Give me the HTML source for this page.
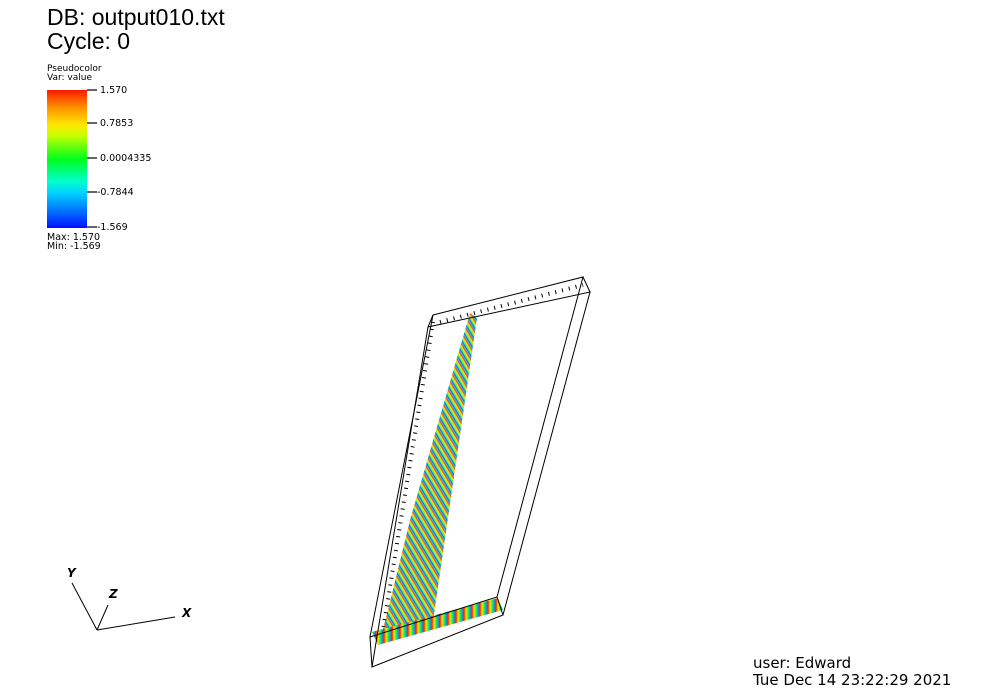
<!DOCTYPE html>
<html><head><style>
body{margin:0;width:1004px;height:696px;background:#fff;overflow:hidden;font-family:"DejaVu Sans","Liberation Sans",sans-serif;}
.t{position:absolute;color:#000;white-space:nowrap;}
</style></head><body>
<div class="t" style="left:47px;top:5px;font-size:23px;line-height:24px;font-family:'Liberation Sans',sans-serif;">DB: output010.txt<br>Cycle: 0</div>
<div class="t" style="left:47px;top:65px;font-size:9px;line-height:9px;">Pseudocolor<br>Var: value</div>
<div style="position:absolute;left:47px;top:90px;width:40px;height:138px;background:linear-gradient(#ff1a00,#ff8c00 12%,#ffe600 25%,#c8ff00 33%,#00ff1a 50%,#00ffcc 66%,#00d0ff 75%,#0060ff 90%,#0010ff);"></div>
<svg style="position:absolute;left:0;top:0" width="1004" height="696">
<g stroke="#000" stroke-width="1.2">
<line x1="87" y1="90" x2="97" y2="90"/><line x1="87" y1="123" x2="97" y2="123"/><line x1="87" y1="158" x2="97" y2="158"/><line x1="87" y1="192" x2="97" y2="192"/><line x1="87" y1="227" x2="97" y2="227"/>
</g>
<g font-family="DejaVu Sans,Liberation Sans,sans-serif" font-size="9.5" fill="#000">
<text x="100" y="93">1.570</text><text x="100" y="126">0.7853</text><text x="100" y="161">0.0004335</text><text x="97" y="195">-0.7844</text><text x="97" y="230">-1.569</text>
<text x="47" y="240">Max:  1.570</text><text x="47" y="249">Min: -1.569</text>
</g>
<defs>
<linearGradient id="s" x1="0" y1="0" x2="8" y2="0" gradientUnits="userSpaceOnUse" spreadMethod="repeat">
<stop offset="0" stop-color="#ff2000"/><stop offset=".25" stop-color="#ffe000"/><stop offset=".5" stop-color="#20ff40"/><stop offset=".75" stop-color="#00a0ff"/><stop offset="1" stop-color="#ff2000"/></linearGradient>
<linearGradient id="v" x1="0" y1="0" x2="5" y2="-3" gradientUnits="userSpaceOnUse" spreadMethod="repeat">
<stop offset="0" stop-color="#20ff40"/><stop offset=".3" stop-color="#ffe000"/><stop offset=".5" stop-color="#ff3000"/><stop offset=".7" stop-color="#00c0ff"/><stop offset=".85" stop-color="#0040ff"/><stop offset="1" stop-color="#20ff40"/></linearGradient>
</defs>
<polygon points="470,313 477,318 432,628 380,640 388,610 410,520" fill="url(#v)" opacity=".9"/>
<polygon points="372,632 498,598 503,610 378,645" fill="url(#s)"/>
<g fill="none" stroke="#000" stroke-width="1">
<polygon points="433,315 583,277 497,597 370,637"/>
<polygon points="428,327 590,292 503,615 372,667"/>
<line x1="433" y1="315" x2="428" y2="327"/><line x1="583" y1="277" x2="590" y2="292"/><line x1="497" y1="597" x2="503" y2="615"/><line x1="370" y1="637" x2="372" y2="667"/>
<line x1="433" y1="322" x2="383" y2="630" stroke-dasharray="1 6" stroke-width="4"/>
<line x1="440" y1="322" x2="583" y2="285" stroke-dasharray="1 6" stroke-width="4"/>
<line x1="97" y1="630" x2="72" y2="583"/><line x1="97" y1="630" x2="175" y2="617"/><line x1="97" y1="630" x2="108" y2="605"/>
</g>
<g font-family="DejaVu Sans,Liberation Sans,sans-serif" font-size="12" font-style="italic" font-weight="bold" fill="#000">
<text x="67" y="577">Y</text><text x="109" y="598">Z</text><text x="182" y="617">X</text>
</g>
</svg>
<div class="t" style="left:753px;top:655px;font-size:15px;line-height:17px;">user: Edward<br>Tue Dec 14 23:22:29 2021</div>
</body></html>
